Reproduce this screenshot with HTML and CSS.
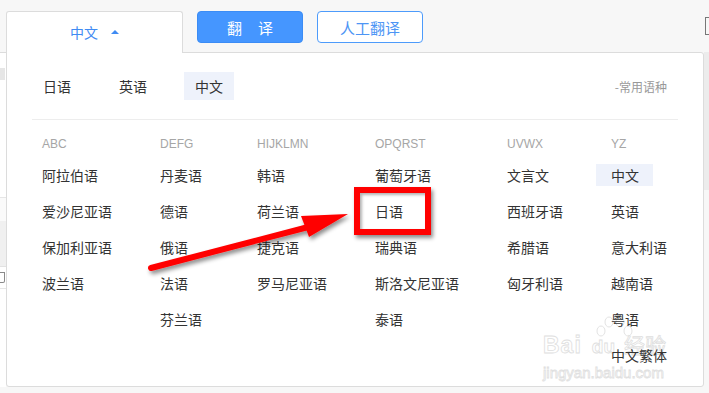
FILE: index.html
```html
<!DOCTYPE html>
<html lang="zh-CN">
<head>
  <meta charset="UTF-8">
  <title>语种选择</title>
  <link rel="stylesheet" href="styles.css">
</head>
<body>

  <div class="top">
    <div class="tab">中文 <span class="caret"></span></div>
    <button class="btn btn-main"><span>翻</span><span>译</span></button>
    <button class="btn btn-line">人工翻译</button>
    <span class="corner"></span>
  </div>

  <div class="wrap">
    <div class="side">
      <div class="s1"></div>
      <div class="s2"></div>
      <div class="s3"></div>
      <div class="s4"></div>
      <div class="s5"><span class="glyph"></span></div>
    </div>

    <div class="panel">
      <div class="wm">
        <svg class="paw" width="40" height="22" viewBox="0 0 40 22">
          <ellipse cx="7" cy="15" rx="4" ry="5" />
          <ellipse cx="15" cy="6" rx="4" ry="5" />
          <ellipse cx="26" cy="6" rx="4" ry="5" />
          <ellipse cx="34" cy="15" rx="4" ry="5" />
        </svg>
        <div class="wm-logo"><span class="wm-b">Bai</span><span class="wm-du">du</span><span class="wm-cn">经验</span></div>
        <div class="wm-url">jingyan.baidu.com</div>
      </div>

      <div class="common">
        <span class="item">日语</span>
        <span class="item">英语</span>
        <span class="item on">中文</span>
        <span class="hint">-常用语种</span>
      </div>
      <div class="line"></div>

      <div class="grid">
        <div class="col">
          <div class="head">ABC</div>
          <div class="lang">阿拉伯语</div>
          <div class="lang">爱沙尼亚语</div>
          <div class="lang">保加利亚语</div>
          <div class="lang">波兰语</div>
        </div>
        <div class="col">
          <div class="head">DEFG</div>
          <div class="lang">丹麦语</div>
          <div class="lang">德语</div>
          <div class="lang">俄语</div>
          <div class="lang">法语</div>
          <div class="lang">芬兰语</div>
        </div>
        <div class="col">
          <div class="head">HIJKLMN</div>
          <div class="lang">韩语</div>
          <div class="lang">荷兰语</div>
          <div class="lang">捷克语</div>
          <div class="lang">罗马尼亚语</div>
        </div>
        <div class="col">
          <div class="head">OPQRST</div>
          <div class="lang">葡萄牙语</div>
          <div class="lang">日语</div>
          <div class="lang">瑞典语</div>
          <div class="lang">斯洛文尼亚语</div>
          <div class="lang">泰语</div>
        </div>
        <div class="col">
          <div class="head">UVWX</div>
          <div class="lang">文言文</div>
          <div class="lang">西班牙语</div>
          <div class="lang">希腊语</div>
          <div class="lang">匈牙利语</div>
        </div>
        <div class="col">
          <div class="head">YZ</div>
          <div class="lang on">中文</div>
          <div class="lang">英语</div>
          <div class="lang">意大利语</div>
          <div class="lang">越南语</div>
          <div class="lang">粤语</div>
          <div class="lang">中文繁体</div>
        </div>
      </div>

      <div class="mark"></div>
    </div>

    <div class="rail"><div class="thumb"></div></div>
  </div>

  <!-- annotation arrow -->
  <svg class="arrow" width="709" height="393" viewBox="0 0 709 393">
    <defs>
      <filter id="sh" x="-10%" y="-20%" width="130%" height="160%">
        <feDropShadow dx="2" dy="3" stdDeviation="2" flood-color="#000" flood-opacity="0.45"/>
      </filter>
    </defs>
    <g filter="url(#sh)" fill="#f00">
      <line x1="151" y1="268" x2="316" y2="225" stroke="#f00" stroke-width="6" stroke-linecap="round"/>
      <polygon points="301,216 348,214 309,237"/>
    </g>
  </svg>

</body>
</html>
```

FILE: styles.css
```css
body {
  margin: 0;
  width: 709px;
  height: 393px;
  overflow: hidden;
  position: relative;
  background: #f7f7f7;
  font-family: "Noto Sans CJK SC", "Liberation Sans", sans-serif;
  color: #333;
}

.top {
  height: 52px;
  display: flex;
  align-items: flex-start;
  padding-left: 6px;
}

.tab {
  position: relative;
  z-index: 2;
  box-sizing: border-box;
  width: 177px;
  height: 42px;
  margin-top: 11px;
  background: #fff;
  border: 1px solid #dcdcdc;
  border-bottom: none;
  border-radius: 3px 3px 0 0;
  display: flex;
  align-items: center;
  justify-content: center;
  gap: 13px;
  font-size: 14px;
  color: #3f8bf3;
  padding-bottom: 2px;
}

.caret {
  width: 0;
  height: 0;
  border-left: 4px solid transparent;
  border-right: 4px solid transparent;
  border-bottom: 4px solid #3f8bf3;
}

.btn {
  box-sizing: border-box;
  width: 106px;
  height: 32px;
  margin-top: 11px;
  margin-left: 14px;
  border-radius: 4px;
  font-family: "Noto Sans CJK SC", sans-serif;
  font-size: 15px;
  cursor: pointer;
  display: flex;
  align-items: center;
  justify-content: center;
  padding: 0;
}

.btn-main {
  background: #4596ff;
  border: 1px solid #3b8cf5;
  color: #fff;
  gap: 16px;
}

.btn-line {
  background: #fff;
  border: 1px solid #4d9bfb;
  color: #4d95f5;
}

.corner {
  margin-left: auto;
  margin-top: 17px;
  width: 3px;
  height: 16px;
  border: 1px solid #777;
  border-right: none;
}

.wrap {
  display: flex;
  align-items: flex-start;
}

.side {
  width: 6px;
  height: 335px;
  background: #fff;
  border-top: 1px solid #dcdcdc;
  box-sizing: border-box;
  overflow: hidden;
}

.s1 { margin-top: 15px; height: 12px; width: 5px; background: #e6e6e6; }
.s2 { height: 117px; border-bottom: 1px solid #e6e6e6; }
.s3 { height: 23px; background: #fafafa; }
.s4 { height: 45px; background: #f0f0f0; border-bottom: 1px solid #e2e2e2; }
.s5 {
  height: 21px;
  border-bottom: 1px solid #e6e6e6;
  display: flex;
  align-items: center;
}

.glyph {
  width: 4px;
  height: 9px;
  border: 1px solid #8a8a8a;
  border-left: none;
  border-radius: 0 0 2px 0;
}

.panel {
  position: relative;
  box-sizing: border-box;
  width: 698px;
  height: 335px;
  background: #fff;
  border: 1px solid #dcdcdc;
  border-radius: 0 3px 3px 3px;
  padding: 19px 25px 0;
}

.common {
  display: flex;
  align-items: center;
  gap: 26px;
  height: 28px;
}

.item {
  line-height: 28px;
  padding: 0 11px;
  font-size: 14px;
}

.item.on, .lang.on {
  background: #eef2fb;
}

.hint {
  margin-left: auto;
  margin-right: 11px;
  font-size: 12px;
  color: #999;
}

.line {
  height: 1px;
  background: #ededed;
  margin-top: 19px;
}

.grid {
  position: relative;
  display: grid;
  grid-template-columns: 118px 97px 118px 132px 104px 1fr;
  padding-left: 10px;
  margin-top: 14px;
}

.col {
  display: flex;
  flex-direction: column;
  align-items: flex-start;
  gap: 14px;
}

.head {
  font-family: "Liberation Sans", Arial, sans-serif;
  font-size: 12px;
  line-height: 20px;
  color: #a6a6a6;
  margin-bottom: -4px;
}

.lang {
  font-size: 14px;
  line-height: 22px;
}

.lang.on {
  margin-left: -15px;
  padding: 0 14px 0 15px;
}

.mark {
  position: absolute;
  left: 347px;
  top: 134px;
  width: 77px;
  height: 48px;
  box-sizing: border-box;
  border: 6px solid #f00;
  box-shadow: 2px 3px 4px rgba(0,0,0,0.45), inset 2px 2px 3px rgba(0,0,0,0.3);
}

.rail {
  width: 5px;
  height: 335px;
}

.thumb {
  height: 138px;
  background: #ececec;
}

.arrow {
  position: absolute;
  left: 0;
  top: 0;
  pointer-events: none;
}

/* faint site watermark, sits under the list text */
.wm {
  position: absolute;
  left: 536px;
  top: 263px;
  width: 134px;
  pointer-events: none;
}

.paw {
  position: absolute;
  left: 51px;
  top: 0;
  fill: none;
  stroke: #e3e3e3;
  stroke-width: 1;
}

.wm-logo {
  margin-top: 18px;
  display: flex;
  align-items: baseline;
  color: #fff;
  -webkit-text-stroke: 0.8px #dedede;
  font-family: "Liberation Sans", Arial, sans-serif;
  font-weight: bold;
  line-height: 20px;
}

.wm-b {
  font-size: 23px;
  letter-spacing: 1px;
}

.wm-du {
  font-size: 19px;
  margin-left: 10px;
  margin-right: 9px;
}

.wm-cn {
  font-family: "Noto Sans CJK SC", sans-serif;
  font-size: 21px;
  font-weight: normal;
}

.wm-url {
  margin-top: 9px;
  font-family: "Liberation Sans", Arial, sans-serif;
  font-size: 15px;
  line-height: 14px;
  color: #fff;
  -webkit-text-stroke: 0.8px #e0e0e0;
}
```
